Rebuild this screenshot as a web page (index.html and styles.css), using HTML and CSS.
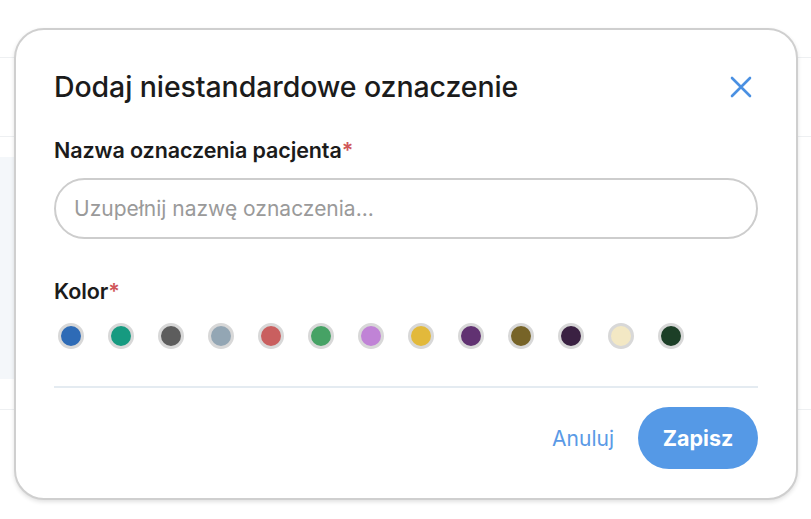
FILE: index.html
```html
<!DOCTYPE html>
<html lang="pl">
<head>
<meta charset="utf-8">
<link rel="stylesheet" href="styles.css">
</head>
<body>
<div class="page">
  <div class="bg-top"></div>
  <div class="bg-row"></div>
  <div class="bg-main">
    <div class="bg-card"></div>
  </div>
  <div class="bg-bottom"></div>
</div>

<div class="modal">
  <div class="modal-header">
    <h2 class="modal-title">Dodaj niestandardowe oznaczenie</h2>
    <button class="close-btn" aria-label="Zamknij">
      <svg width="24" height="24" viewBox="0 0 24 24"><path d="M3 3 L21 21 M21 3 L3 21" stroke="#4a90e2" stroke-width="2.6" stroke-linecap="round" fill="none"/></svg>
    </button>
  </div>
  <label class="field-label">Nazwa oznaczenia pacjenta<span class="req">*</span></label>
  <input class="text-input" type="text" placeholder="Uzupełnij nazwę oznaczenia...">
  <label class="field-label label-color">Kolor<span class="req">*</span></label>
  <div class="swatches">
    <span class="swatch" style="background:#2e6bb6"></span>
    <span class="swatch" style="background:#169a80"></span>
    <span class="swatch" style="background:#5d5d5d"></span>
    <span class="swatch" style="background:#93a6b4"></span>
    <span class="swatch" style="background:#c95f5f"></span>
    <span class="swatch" style="background:#46a265"></span>
    <span class="swatch" style="background:#c083d6"></span>
    <span class="swatch" style="background:#e2b93b"></span>
    <span class="swatch" style="background:#613272"></span>
    <span class="swatch" style="background:#776428"></span>
    <span class="swatch" style="background:#3a2142"></span>
    <span class="swatch" style="background:#f3e8c4"></span>
    <span class="swatch" style="background:#1c3f27"></span>
  </div>
  <div class="divider"></div>
  <div class="modal-footer">
    <button class="btn-link">Anuluj</button>
    <button class="btn-primary">Zapisz</button>
  </div>
</div>
</body>
</html>
```
FILE: styles.css
```css
* { box-sizing: border-box; }
html, body { margin: 0; padding: 0; background: #fff; }
body { font-family: Inter, "Liberation Sans", sans-serif; width: 811px; height: 519px; overflow: hidden; }

.page { display: flex; flex-direction: column; height: 519px; }
.bg-top { height: 58px; border-bottom: 1px solid #eef0f2; flex: none; }
.bg-row { height: 79px; border-bottom: 1px solid #eef0f2; flex: none; }
.bg-main { height: 273px; border-bottom: 1px solid #eef0f2; flex: none; padding-top: 20px; }
.bg-card { width: 60px; height: 222px; background: #f4f7fa; border-radius: 0 30px 30px 0; }
.bg-bottom { flex: 1; }

.modal {
  position: absolute;
  left: 14px; top: 28px;
  width: 784px; height: 472px;
  background: #fff;
  border: 2px solid #cfcfcf;
  border-radius: 30px;
  box-shadow: 0 2px 4px rgba(0,0,0,0.12);
  padding: 42px 38px 0 38px;
  display: flex; flex-direction: column;
}
.modal-header { display: flex; align-items: center; justify-content: space-between; height: 30px; }
.modal-title { margin: 0; font-size: 28.5px; font-weight: 500; color: #1b1b1b; line-height: 30px; letter-spacing: -0.1px; }
.close-btn { border: 0; background: none; padding: 0; width: 24px; height: 24px; margin-right: 5px; display: flex; }

.field-label { display: block; font-size: 21.5px; font-weight: 600; color: #1b1b1b; line-height: 24px; margin-top: 36px; letter-spacing: -0.1px; }
.req { color: #d0575a; }
.label-color { margin-top: 40px; }

.text-input {
  margin-top: 16px;
  width: 704px; height: 61px;
  border: 2px solid #cdcdcd;
  border-radius: 31px;
  padding: 0 18px;
  font-family: Inter, "Liberation Sans", sans-serif;
  font-size: 21px;
  color: #333;
  outline: none;
}
.text-input::placeholder { color: #9a9a9a; }

.swatches { display: flex; gap: 24px; margin-top: 20px; padding-left: 4px; }
.swatch { width: 26px; height: 26px; border-radius: 50%; border: 3px solid #d8d8d8; flex: none; }

.divider { height: 2px; background: #e4ebf1; margin-top: 37px; }

.modal-footer { display: flex; justify-content: flex-end; align-items: center; gap: 24px; margin-top: 19px; }
.btn-link { border: 0; background: none; padding: 0; font-family: Inter, "Liberation Sans", sans-serif; font-size: 21px; color: #5a9ae6; }
.btn-primary {
  border: 0; background: #5599e6; color: #fff;
  width: 120px; height: 62px; border-radius: 31px;
  font-family: Inter, "Liberation Sans", sans-serif; font-size: 21.5px; font-weight: 700;
}
```
